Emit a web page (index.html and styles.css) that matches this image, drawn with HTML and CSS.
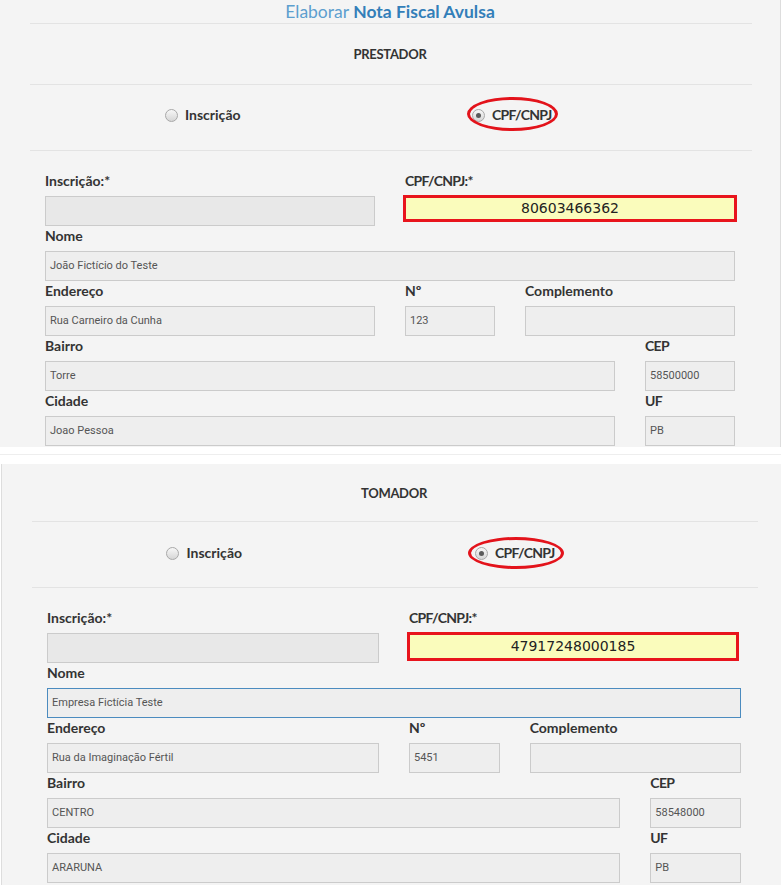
FILE: index.html
```html
<!DOCTYPE html>
<html lang="pt-BR">
<head>
<meta charset="utf-8">
<title>Elaborar Nota Fiscal Avulsa</title>
<link rel="stylesheet" href="styles.css">
</head>
<body>
<section class="panel panel-top">
  <h1 class="title"><span class="light">Elaborar</span> <strong>Nota Fiscal Avulsa</strong></h1>
  <div class="rule"></div>
  <div class="head">PRESTADOR</div>
  <div class="rule"></div>
  <div class="radio-row">
    <div class="radio-item"><span class="radio"></span>Inscrição</div>
    <div class="radio-item marked"><span class="radio checked"></span><span class="caps">CPF/CNPJ</span><span class="ring"></span></div>
  </div>
  <div class="rule"></div>
  <div class="form">
    <div class="row">
      <div class="field s6"><label>Inscrição:*</label><div class="input blank"></div></div>
      <div class="field s6"><label class="caps">CPF/CNPJ:*</label><div class="input flag">80603466362</div></div>
    </div>
    <div class="row">
      <div class="field s12"><label>Nome</label><div class="input">João Fictício do Teste</div></div>
    </div>
    <div class="row">
      <div class="field s6"><label>Endereço</label><div class="input">Rua Carneiro da Cunha</div></div>
      <div class="field s2"><label>Nº</label><div class="input">123</div></div>
      <div class="field s4"><label>Complemento</label><div class="input"></div></div>
    </div>
    <div class="row">
      <div class="field s10"><label>Bairro</label><div class="input">Torre</div></div>
      <div class="field s2"><label class="caps">CEP</label><div class="input">58500000</div></div>
    </div>
    <div class="row">
      <div class="field s10"><label>Cidade</label><div class="input">Joao Pessoa</div></div>
      <div class="field s2"><label class="caps">UF</label><div class="input">PB</div></div>
    </div>
  </div>
</section>
<div class="gap"><div class="gap-line"></div></div>
<section class="panel panel-bottom">
  <div class="head">TOMADOR</div>
  <div class="rule"></div>
  <div class="radio-row">
    <div class="radio-item"><span class="radio"></span>Inscrição</div>
    <div class="radio-item marked"><span class="radio checked"></span><span class="caps">CPF/CNPJ</span><span class="ring"></span></div>
  </div>
  <div class="rule"></div>
  <div class="form">
    <div class="row">
      <div class="field s6"><label>Inscrição:*</label><div class="input blank"></div></div>
      <div class="field s6"><label class="caps">CPF/CNPJ:*</label><div class="input flag">47917248000185</div></div>
    </div>
    <div class="row">
      <div class="field s12"><label>Nome</label><div class="input focus">Empresa Fictícia Teste</div></div>
    </div>
    <div class="row">
      <div class="field s6"><label>Endereço</label><div class="input">Rua da Imaginação Fértil</div></div>
      <div class="field s2"><label>Nº</label><div class="input">5451</div></div>
      <div class="field s4"><label>Complemento</label><div class="input"></div></div>
    </div>
    <div class="row">
      <div class="field s10"><label>Bairro</label><div class="input">CENTRO</div></div>
      <div class="field s2"><label class="caps">CEP</label><div class="input">58548000</div></div>
    </div>
    <div class="row">
      <div class="field s10"><label>Cidade</label><div class="input">ARARUNA</div></div>
      <div class="field s2"><label class="caps">UF</label><div class="input">PB</div></div>
    </div>
  </div>
</section>
</body>
</html>
```

FILE: styles.css
```css
body {
  margin: 0;
  background: #ffffff;
  font-family: Lato, "Open Sans", sans-serif;
  color: #333333;
}

.panel {
  background: #f4f4f4;
  box-sizing: border-box;
}

.panel-top {
  width: 781px;
  border-right: 1px solid #dddddd;
  padding: 0 30px 1px 30px;
}

.panel-bottom {
  width: 780px;
  margin-left: 1px;
  border-left: 1px solid #dddddd;
  padding: 0 25px 2px 30px;
}

.title {
  margin: 0;
  height: 23px;
  line-height: 23px;
  text-align: center;
  font-size: 17.5px;
  font-weight: 400;
  color: #5d9fcf;
}

.title strong {
  font-weight: 700;
  color: #337fb9;
}

.rule {
  height: 1px;
  background: #e3e3e3;
  margin-right: -2px;
}

.head {
  height: 60px;
  display: flex;
  align-items: center;
  justify-content: center;
  font-weight: 700;
  font-size: 13px;
  letter-spacing: -0.3px;
  color: #333333;
}

.panel-bottom .head {
  height: 57px;
}

.radio-row {
  display: grid;
  grid-template-columns: 307px auto;
  padding: 20px 0 25px 134.5px;
}

.panel-bottom .radio-row {
  grid-template-columns: 308.5px auto;
  padding: 21px 0 24px 134px;
}

.radio-item {
  position: relative;
  display: flex;
  align-items: center;
  gap: 7.5px;
  width: max-content;
  height: 20px;
  line-height: 20px;
  font-weight: 700;
  font-size: 14px;
  color: #333333;
}

.caps {
  letter-spacing: -0.7px;
}

.radio {
  box-sizing: border-box;
  width: 13px;
  height: 13px;
  border-radius: 50%;
  border: 1px solid #a8a8a8;
  background: linear-gradient(#f7f7f7, #d6d6d6);
  position: relative;
}

.radio.checked::after {
  content: "";
  position: absolute;
  left: 3px;
  top: 3px;
  width: 5px;
  height: 5px;
  border-radius: 50%;
  background: #5a5a5a;
}

.ring {
  position: absolute;
  left: -5px;
  top: 50%;
  width: 91px;
  height: 34px;
  margin-top: -18px;
  box-sizing: border-box;
  border: 3px solid #e3131b;
  border-radius: 50%;
}

.panel-bottom .ring {
  left: -7px;
  width: 96px;
  height: 32px;
  margin-top: -16.5px;
}

.form {
  padding-top: 20px;
}

.row {
  display: grid;
  grid-template-columns: repeat(12, 1fr);
}

.field {
  padding: 0 15px;
  min-width: 0;
}

.s2 { grid-column: span 2; }
.s4 { grid-column: span 4; }
.s6 { grid-column: span 6; }
.s10 { grid-column: span 10; }
.s12 { grid-column: span 12; }

.field label {
  display: block;
  height: 20px;
  line-height: 20px;
  margin-bottom: 5px;
  font-weight: 700;
  font-size: 14px;
  color: #333333;
}

.field label.caps {
  letter-spacing: -0.7px;
}

.input {
  box-sizing: border-box;
  height: 30px;
  border: 1px solid #cbcbcb;
  background: #eeeeee;
  padding: 0 4px;
  line-height: 28px;
  font-family: Roboto, "Open Sans", sans-serif;
  font-size: 11px;
  color: #555555;
  white-space: nowrap;
  overflow: hidden;
}

.input.blank {
  background: #e8e8e8;
}

.input.focus {
  border-color: #4b8bbf;
}

.input.flag {
  margin: -1px -2px 0 -2px;
  height: 27px;
  border: 3px solid #e8141c;
  background: #fafcbc;
  text-align: center;
  font-family: "DejaVu Sans", sans-serif;
  font-size: 14px;
  line-height: 21px;
  color: #222222;
}

.panel-bottom .input.flag {
  margin: -1px 2px 0 -2px;
  height: 29px;
  line-height: 23px;
}

.gap {
  height: 17px;
  box-sizing: border-box;
  padding-top: 7px;
}

.gap-line {
  height: 1px;
  background: #eeeeee;
}
```
